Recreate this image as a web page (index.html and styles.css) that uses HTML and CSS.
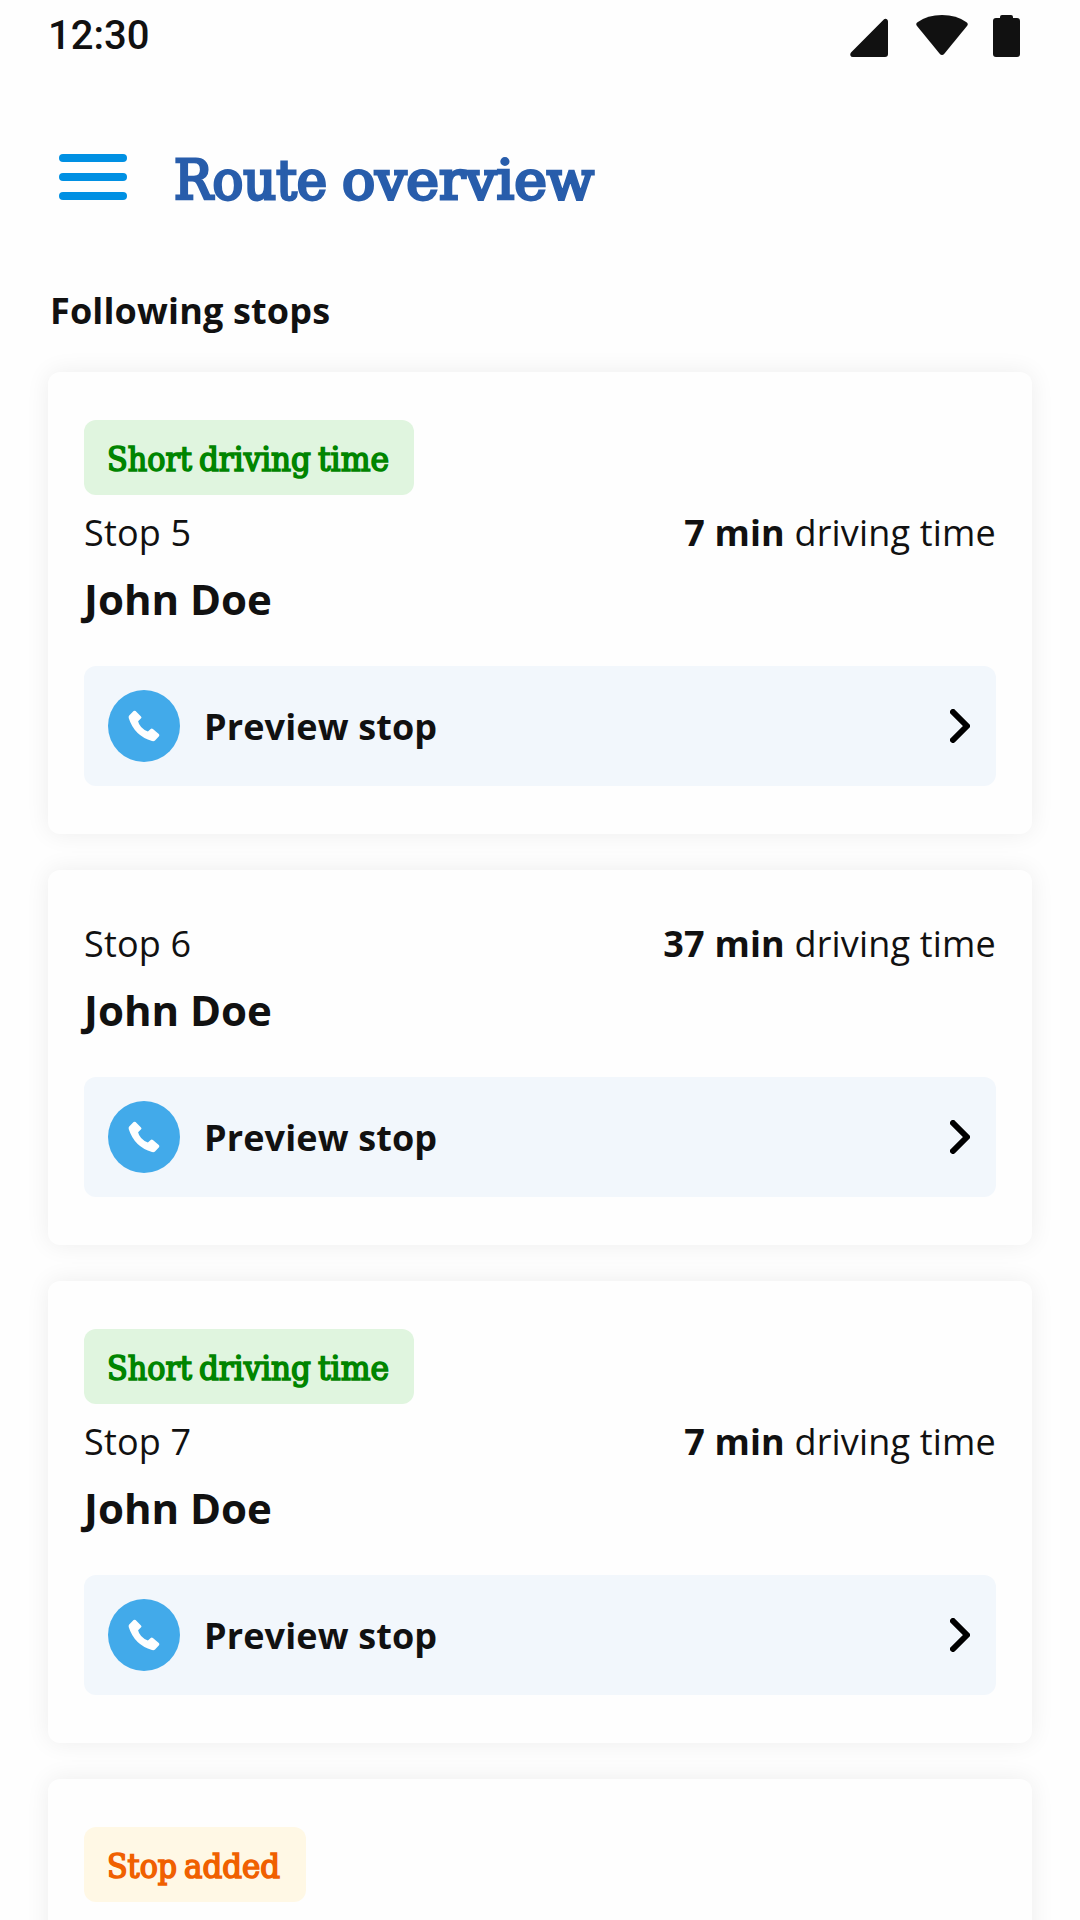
FILE: index.html
```html
<!DOCTYPE html>
<html lang="en">
<head>
<meta charset="utf-8">
<title>Route overview</title>
<link rel="stylesheet" href="styles.css">
</head>
<body>
<svg class="defs" aria-hidden="true">
  <symbol id="phone" viewBox="0 0 32 32">
    <path d="M1.2 5.6L5.6 1.1Q6.6 .2 7.6 1.1L13 6.4Q14 7.4 13.1 8.3L10.1 11.2Q11.4 17.8 19.9 21.6L22.7 18.9Q23.8 18 24.9 18.9L30.8 24Q31.9 25.100 31 26.2L27 30.5Q26 31.500 24 31Q6.500 26 .7 8Q.4 6.500 1.200 5.600Z"/>
  </symbol>
  <symbol id="chevron" viewBox="0 0 20 34">
    <path d="M3 3L17 17L3 31" fill="none" stroke="#000" stroke-width="6" stroke-linecap="round" stroke-linejoin="round"/>
  </symbol>
</svg>
<div class="screen">
  <header class="status">
    <span class="clock">12:30</span>
    <svg class="signals" viewBox="0 0 172 44" fill="#111">
      <path d="M36.800 5.400Q38 4.300 39.500 5Q41 5.700 41 7.500V40Q41 43 38 43H6Q4 43 3.400 41.500Q2.800 40 4 38.500Z"/>
      <path d="M70 12Q68.300 9.900 70.500 8.200Q80.500 1 95 1Q109.500 1 119.500 8.200Q121.700 9.900 120 12L97.500 39.500Q95 42.500 92.500 39.500Z"/>
      <path d="M149 4H153V3Q153 1 155 1H164Q166 1 166 3V4H170Q173 4 173 7V40Q173 43 170 43H149Q146 43 146 40V7Q146 4 149 4Z"/>
    </svg>
  </header>
  <div class="topbar">
    <button class="menu" aria-label="Menu"><i></i><i></i><i></i></button>
    <h1><svg class="title" width="420" height="66"><text y="45"><tspan x="-1" textLength="153" lengthAdjust="spacingAndGlyphs">Route</tspan> <tspan x="167" textLength="252" lengthAdjust="spacingAndGlyphs">overview</tspan></text></svg></h1>
  </div>
  <h2>Following stops</h2>
  <main class="stops">
    <article class="card">
      <div class="badge short"><svg width="282" height="75"><text y="51"><tspan x="-1" textLength="85" lengthAdjust="spacingAndGlyphs">Short</tspan> <tspan x="91" textLength="112" lengthAdjust="spacingAndGlyphs">driving</tspan> <tspan x="210" textLength="71" lengthAdjust="spacingAndGlyphs">time</tspan></text></svg></div>
      <div class="meta"><span>Stop 5</span><span><b>7 min</b> driving time</span></div>
      <h3>John Doe</h3>
      <a class="preview"><span class="call"><svg><use href="#phone"/></svg></span><b>Preview stop</b><svg class="chevron"><use href="#chevron"/></svg></a>
    </article>
    <article class="card">
      <div class="meta"><span>Stop 6</span><span><b>37 min</b> driving time</span></div>
      <h3>John Doe</h3>
      <a class="preview"><span class="call"><svg><use href="#phone"/></svg></span><b>Preview stop</b><svg class="chevron"><use href="#chevron"/></svg></a>
    </article>
    <article class="card">
      <div class="badge short"><svg width="282" height="75"><text y="51"><tspan x="-1" textLength="85" lengthAdjust="spacingAndGlyphs">Short</tspan> <tspan x="91" textLength="112" lengthAdjust="spacingAndGlyphs">driving</tspan> <tspan x="210" textLength="71" lengthAdjust="spacingAndGlyphs">time</tspan></text></svg></div>
      <div class="meta"><span>Stop 7</span><span><b>7 min</b> driving time</span></div>
      <h3>John Doe</h3>
      <a class="preview"><span class="call"><svg><use href="#phone"/></svg></span><b>Preview stop</b><svg class="chevron"><use href="#chevron"/></svg></a>
    </article>
    <article class="card last">
      <div class="badge added"><svg width="174" height="75"><text y="51"><tspan x="-1" textLength="70" lengthAdjust="spacingAndGlyphs">Stop</tspan> <tspan x="76" textLength="96" lengthAdjust="spacingAndGlyphs">added</tspan></text></svg></div>
    </article>
  </main>
</div>
</body>
</html>
```
FILE: styles.css
```css
* { box-sizing: border-box; margin: 0; }
body { background: #fefefe; color: #111; font: 36px/54px "Open Sans", sans-serif; }
svg { display: block; flex: none; }
.defs { width: 0; height: 0; position: absolute; }
.screen { width: 1080px; height: 1920px; overflow: hidden; display: flex; flex-direction: column; }
.status { height: 72px; flex: none; padding: 14px 61px 0 48px; display: flex; justify-content: space-between; align-items: flex-start; }
.clock { font: 500 40px/44px Roboto, sans-serif; }
.signals { width: 172px; height: 44px; overflow: visible; }
.topbar { height: 210px; flex: none; padding: 82px 59px 0; display: flex; align-items: flex-start; gap: 48px; }
.menu { width: 68px; height: 46px; padding: 0; border: 0; background: none; display: flex; flex-direction: column; justify-content: space-between; }
.menu i { width: 68px; height: 8px; border-radius: 4px; background: #0090e3; }
h1 { font-size: inherit; }
.title { overflow: visible; fill: #285dab; stroke: #285dab; stroke-width: 2.8px; font: 400 55px "DejaVu Serif Condensed", "DejaVu Serif", serif; }
h2 { height: 90px; flex: none; padding: 2px 50px 0; font: 700 36px/54px "Open Sans", sans-serif; letter-spacing: .15px; }
.stops { padding: 0 48px; display: flex; flex-direction: column; gap: 36px; }
.card { padding: 48px 36px; border-radius: 12px; background: #fefefe; box-shadow: 0 0 24px rgba(0, 0, 0, .07); display: flex; flex-direction: column; flex: none; }
.last { height: 462px; }
.badge { align-self: flex-start; height: 75px; padding: 0 24px; border-radius: 12px; margin-bottom: 12px; font: 400 34px "DejaVu Serif Condensed", "DejaVu Serif", serif; stroke-width: 1.6px; }
.badge svg { overflow: visible; }
.short { background: #e0f5df; fill: #008500; stroke: #008500; }
.added { background: #fff8e5; fill: #f06000; stroke: #f06000; }
.meta { height: 54px; line-height: 52px; display: flex; justify-content: space-between; letter-spacing: .18px; }
h3 { height: 63px; margin-bottom: 42px; font: 700 42px/63px "Open Sans", sans-serif; padding-top: 6px; }
.preview { height: 120px; padding: 0 24px; border-radius: 12px; background: #f2f7fc; display: flex; align-items: center; gap: 24px; }
.preview b { flex: 1; padding-top: 2px; letter-spacing: .13px; }
.call { width: 72px; height: 72px; border-radius: 50%; background: #42aaea; display: grid; place-items: center; }
.call svg { width: 32px; height: 32px; fill: #fefefe; }
.chevron { width: 20px; height: 34px; margin-right: 2px; }
```
